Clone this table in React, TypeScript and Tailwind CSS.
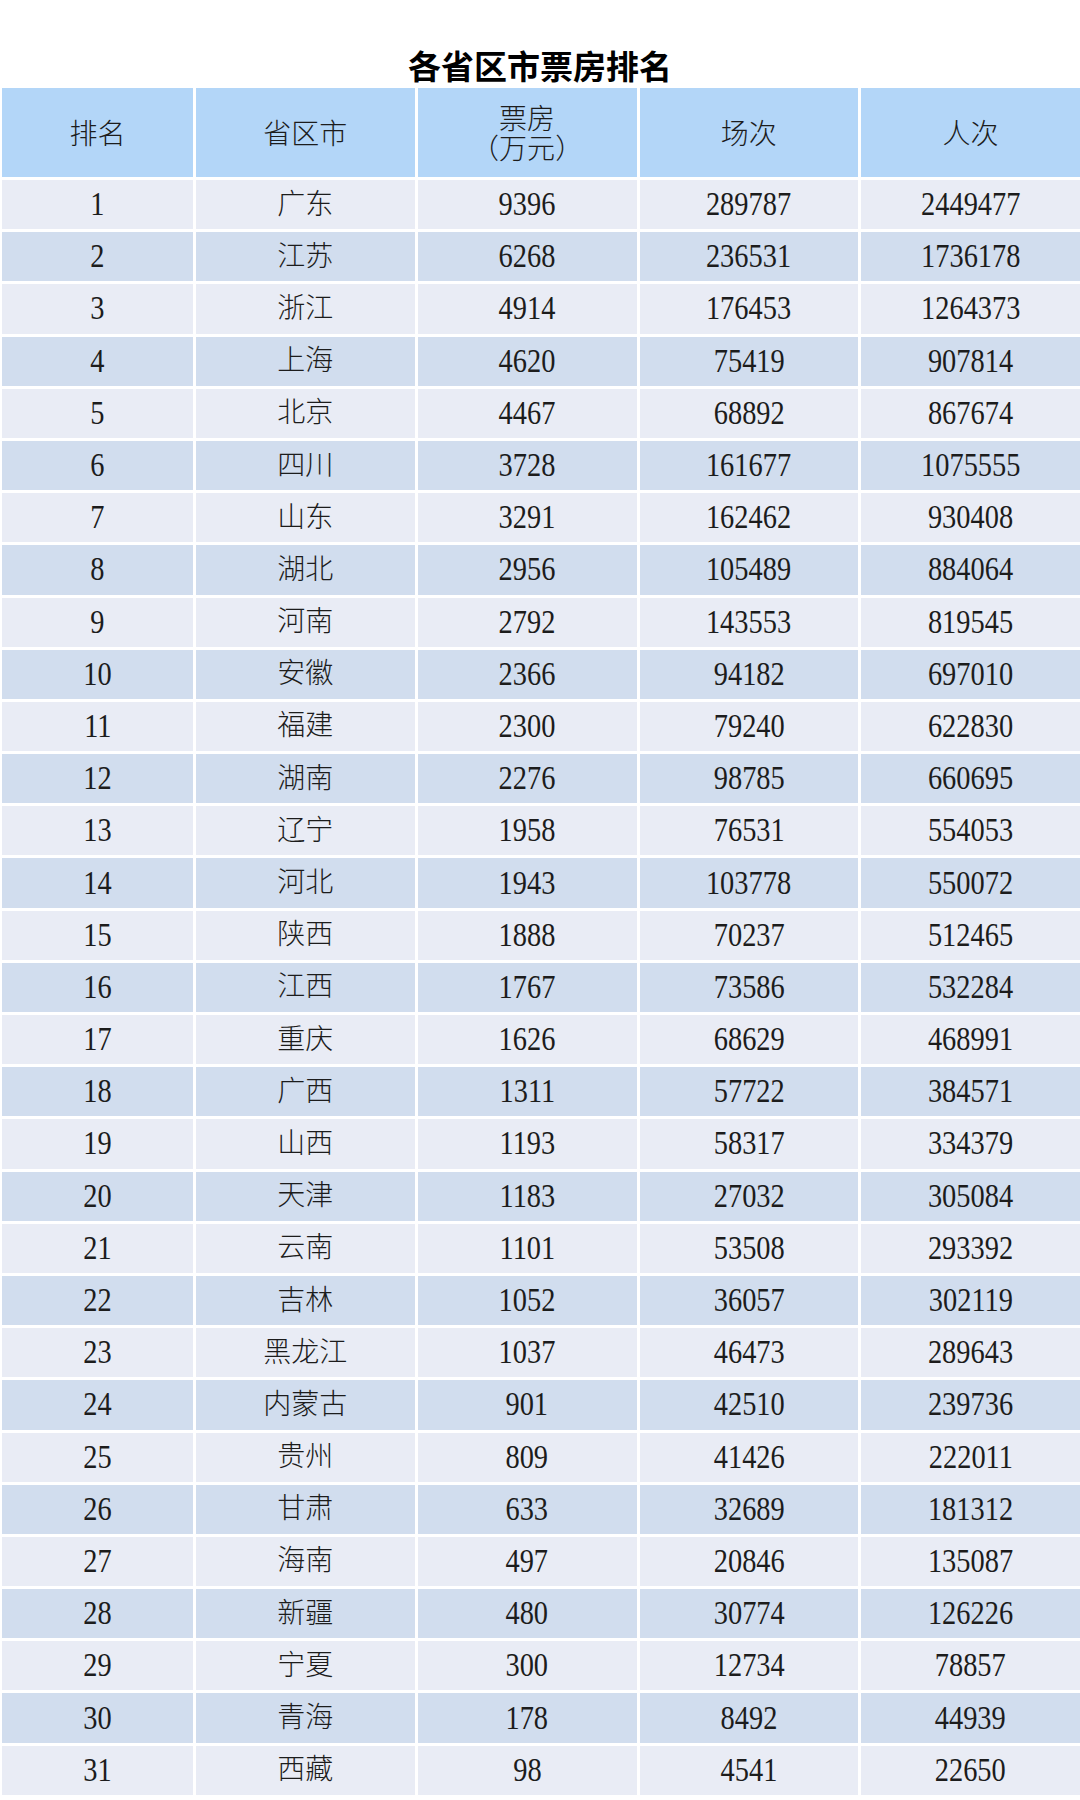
const ROWS: [string, string, string, string][] = [
  ["广东", "9396", "289787", "2449477"],
  ["江苏", "6268", "236531", "1736178"],
  ["浙江", "4914", "176453", "1264373"],
  ["上海", "4620", "75419", "907814"],
  ["北京", "4467", "68892", "867674"],
  ["四川", "3728", "161677", "1075555"],
  ["山东", "3291", "162462", "930408"],
  ["湖北", "2956", "105489", "884064"],
  ["河南", "2792", "143553", "819545"],
  ["安徽", "2366", "94182", "697010"],
  ["福建", "2300", "79240", "622830"],
  ["湖南", "2276", "98785", "660695"],
  ["辽宁", "1958", "76531", "554053"],
  ["河北", "1943", "103778", "550072"],
  ["陕西", "1888", "70237", "512465"],
  ["江西", "1767", "73586", "532284"],
  ["重庆", "1626", "68629", "468991"],
  ["广西", "1311", "57722", "384571"],
  ["山西", "1193", "58317", "334379"],
  ["天津", "1183", "27032", "305084"],
  ["云南", "1101", "53508", "293392"],
  ["吉林", "1052", "36057", "302119"],
  ["黑龙江", "1037", "46473", "289643"],
  ["内蒙古", "901", "42510", "239736"],
  ["贵州", "809", "41426", "222011"],
  ["甘肃", "633", "32689", "181312"],
  ["海南", "497", "20846", "135087"],
  ["新疆", "480", "30774", "126226"],
  ["宁夏", "300", "12734", "78857"],
  ["青海", "178", "8492", "44939"],
  ["西藏", "98", "4541", "22650"],
];

function Num({ value }: { value: string }) {
  return (
    <span className="inline-block scale-x-[0.86] text-[33px] leading-none font-['Liberation_Serif',serif]">
      {value}
    </span>
  );
}

function HeaderCell({ children }: { children: React.ReactNode }) {
  return (
    <div className="flex flex-col items-center justify-center bg-[#b3d6f8] text-center text-[28px] leading-[30px] font-light">
      {children}
    </div>
  );
}

export default function App() {
  return (
    <div className="w-[1080px] h-[1800px] bg-white text-[#1c1c1c] font-['Noto_Sans_CJK_SC',sans-serif]">
      <div className="h-[88px] pt-[45px] text-center text-[33px] leading-[40px] font-bold text-black">
        各省区市票房排名
      </div>

      <div className="pl-[2px] grid grid-cols-[191px_repeat(4,1fr)] grid-rows-[89px_repeat(31,49.2px)] gap-[3px]">
        <HeaderCell>
          <div className="-translate-y-[1px]">排名</div>
        </HeaderCell>
        <HeaderCell>
          <div className="-translate-y-[1px]">省区市</div>
        </HeaderCell>
        <HeaderCell>
          <div className="-translate-y-[1px]">票房</div>
          <div className="-translate-y-[1px] flex">
            <span className="inline-block w-[28px] text-right">（</span>
            <span>万元</span>
            <span className="inline-block w-[28px] text-left">）</span>
          </div>
        </HeaderCell>
        <HeaderCell>
          <div className="-translate-y-[1px]">场次</div>
        </HeaderCell>
        <HeaderCell>
          <div className="-translate-y-[1px]">人次</div>
        </HeaderCell>

        {ROWS.map(([name, box, shows, people], i) => {
          const bg = i % 2 === 0 ? "bg-[#e9ecf5]" : "bg-[#d1ddee]";
          return [
            <div key={`r${i}`} className={`${bg} flex items-center justify-center`}>
              <Num value={String(i + 1)} />
            </div>,
            <div key={`n${i}`} className={`${bg} flex items-center justify-center text-[28px] leading-none font-light`}>
              <span className="-translate-y-[3px]">{name}</span>
            </div>,
            <div key={`b${i}`} className={`${bg} flex items-center justify-center`}>
              <Num value={box} />
            </div>,
            <div key={`s${i}`} className={`${bg} flex items-center justify-center`}>
              <Num value={shows} />
            </div>,
            <div key={`p${i}`} className={`${bg} flex items-center justify-center`}>
              <Num value={people} />
            </div>,
          ];
        })}
      </div>
    </div>
  );
}
